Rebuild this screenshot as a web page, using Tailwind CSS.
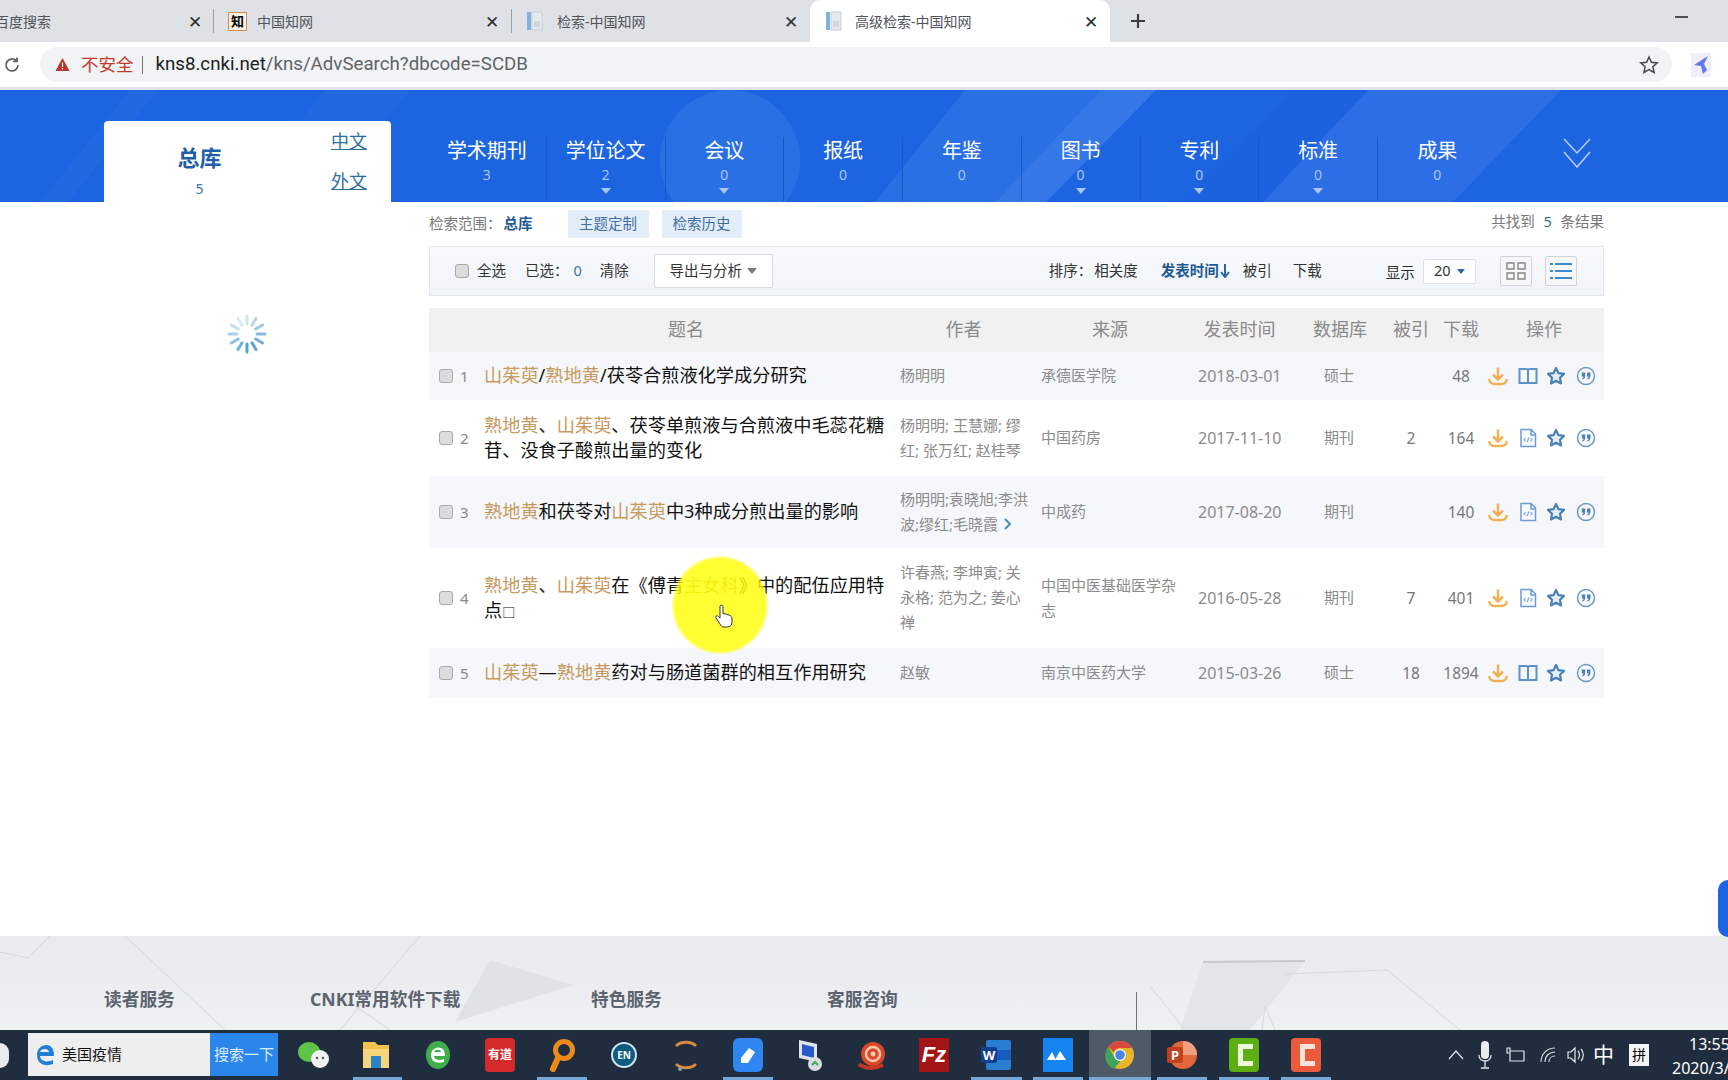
<!DOCTYPE html>
<html lang="zh-CN">
<head>
    <meta charset="UTF-8">
    <title>高级检索-中国知网</title>
    <script src="https://cdn.jsdelivr.net/npm/@tailwindcss/browser@4"></script>
</head>
<body class="w-[1728px] h-[1080px] overflow-hidden relative flex flex-col bg-white font-['Noto_Sans','Noto_Sans_CJK_SC',sans-serif]">
    <svg class="hidden">
        <symbol id="ic-down" viewBox="0 0 20 20"><path d="M10 1.500v12M5 8.500l5 5 5-5M1 13c.8 3.500 2.500 5 5 5h8c2.500 0 4.200-1.500 5-5" fill="none" stroke="#eeb255" stroke-width="2.500"/></symbol>
        <symbol id="ic-book" viewBox="0 0 20 20"><path d="M1.500 3h6.500c1.200 0 2 .8 2 2 0-1.200.8-2 2-2h6.500v14h-6.500c-1 0-2 .4-2 1 0-.6-1-1-2-1H1.500zM10 5v13" fill="none" stroke="#5b92c9" stroke-width="2"/></symbol>
        <symbol id="ic-doc" viewBox="0 0 20 20"><path d="M3 1.500h10l4.500 4.500v12.500H3zM13 1.500V7h4.500" fill="#f6f9fd" stroke="#6d9bd4" stroke-width="1.500"/><path d="M7.500 10l-1.500 1.700 1.500 1.700M12.500 10l1.500 1.700-1.500 1.700M10.800 9.500l-1.500 4.500" fill="none" stroke="#7fa5dc" stroke-width="1.100"/></symbol>
        <symbol id="ic-star" viewBox="0 0 20 20"><path d="M10 2l2.400 5.100 5.600.8-4 3.900 1 5.600-5-2.600-5 2.600 1-5.600-4-3.900 5.600-.8z" fill="#e3edf6" stroke="#4a80b4" stroke-width="2.200" stroke-linejoin="round"/></symbol>
        <symbol id="ic-quote" viewBox="0 0 20 20"><circle cx="10" cy="10" r="8.500" fill="#f6f9fd" stroke="#6e97c4" stroke-width="1.500"/><path d="M5.800 6.500h3.400v3.600c0 1.800-1 3-2.800 3.500l-.4-1c.9-.4 1.400-1 1.400-2H5.800zM11 6.500h3.400v3.600c0 1.800-1 3-2.800 3.500l-.4-1c.9-.4 1.400-1 1.400-2H11z" fill="#4f7fb5"/></symbol>
        <symbol id="ic-tabdoc" viewBox="0 0 20 20"><rect x="0" y="1" width="4" height="18" fill="#7fb2dc"/><path d="M5 1h10v18H5z" fill="#e7eaee" stroke="#c9ced4"/><path d="M7 10h6v6H7z" fill="#d3d7dc"/></symbol>
    </svg>

    <!-- browser tabs -->
    <div class="h-[42px] shrink-0 bg-[#dee1e6] flex items-stretch text-[14px] text-[#50545a] relative">
        <div class="w-[214px] flex items-center justify-between pr-[12px] relative overflow-hidden">
            <span class="-ml-[5px] whitespace-nowrap">百度搜索</span>
            <span class="text-[17px] leading-none text-[#2e3034]">✕</span>
            <span class="absolute right-0 top-[9px] w-px h-[24px] bg-[#9da1a6]"></span>
        </div>
        <div class="w-[298px] flex items-center pl-[14px] pr-[13px] relative">
            <span class="w-[19px] h-[19px] border border-[#d9894a] bg-[#f7f1e6] text-[13px] leading-[17px] text-center text-black font-bold font-['Liberation_Serif','Noto_Sans_CJK_SC',serif]">知</span>
            <span class="ml-[10px] flex-1">中国知网</span>
            <span class="text-[17px] leading-none text-[#2e3034]">✕</span>
            <span class="absolute right-0 top-[9px] w-px h-[24px] bg-[#9da1a6]"></span>
        </div>
        <div class="w-[298px] flex items-center pl-[15px] pr-[12px]">
            <svg class="w-[20px] h-[20px]"><use href="#ic-tabdoc"/></svg>
            <span class="ml-[10px] flex-1">检索-中国知网</span>
            <span class="text-[17px] leading-none text-[#2e3034]">✕</span>
        </div>
        <div class="w-[300px] bg-white rounded-t-[10px] flex items-center pl-[16px] pr-[12px]">
            <svg class="w-[20px] h-[20px]"><use href="#ic-tabdoc"/></svg>
            <span class="ml-[9px] flex-1">高级检索-中国知网</span>
            <span class="text-[17px] leading-none text-[#2e3034]">✕</span>
        </div>
        <svg class="w-[18px] h-[18px] ml-[19px] self-center" viewBox="0 0 18 18"><path d="M9 2v14M2 9h14" stroke="#3a3d41" stroke-width="2.200"/></svg>
        <span class="absolute left-[1675px] top-[16px] w-[13px] h-[2px] bg-[#4a4d52]"></span>
    </div>

    <!-- address bar -->
    <div class="h-[45px] shrink-0 bg-white flex items-start pt-[5px]">
        <svg class="w-[18px] h-[18px] mt-[9px] ml-[3px]" viewBox="0 0 18 18"><path d="M15 9a6 6 0 1 1-1.800-4.300M14 1.500v4h-4" fill="none" stroke="#5a5e63" stroke-width="1.700"/></svg>
        <div class="ml-[19px] w-[1632px] h-[35px] rounded-full bg-[#f1f3f4] flex items-center pl-[15px] pr-[13px]">
            <svg class="w-[15px] h-[15px]" viewBox="0 0 15 15"><path d="M7.500 1L14.500 14H.5z" fill="#b8352b"/><path d="M7.500 5.500v4.500M7.500 11v1.500" stroke="#fff" stroke-width="1.200"/></svg>
            <span class="ml-[11px] text-[17.500px] text-[#c0392b]">不安全</span>
            <span class="ml-[8px] w-px h-[18px] bg-[#777]"></span>
            <span class="ml-[13px] text-[18.700px] text-[#202124] font-['Roboto','Noto_Sans_CJK_SC',sans-serif]">kns8.cnki.net<span class="text-[#5f6368]">/kns/AdvSearch?dbcode=SCDB</span></span>
            <svg class="w-[20px] h-[20px] ml-auto" viewBox="0 0 20 20"><path d="M10 2l2.400 5.300 5.800.6-4.300 3.900 1.200 5.700L10 14.600l-5.100 2.900 1.200-5.700L1.800 7.900l5.800-.6z" fill="none" stroke="#44474b" stroke-width="1.500"/></svg>
        </div>
        <svg class="w-[20px] h-[24px] ml-[19px] mt-[6px] bg-[#f0eef8]" viewBox="0 0 20 24"><path d="M17 3L3 12l7 1 2 8 4-4-3-6z" fill="#5b7be8"/></svg>
    </div>
    <div class="h-[3px] shrink-0 bg-[#dfe3ea]"></div>

    <!-- blue database nav -->
    <div class="h-[112px] shrink-0 bg-[#1d64e0] relative flex items-start overflow-hidden">
        <svg class="absolute inset-0" width="1728" height="112" viewBox="0 0 1728 112">
            <polygon points="130,0 158,0 68,112 40,112" fill="#2168e1"/>
            <polygon points="325,0 410,0 320,112 235,112" fill="#2168e1"/>
            <circle cx="730" cy="70" r="70" fill="#2a70e5"/>
            <polygon points="965,0 1156,0 1046,112 875,112" fill="#2a70e5"/>
            <polygon points="1101,0 1156,0 1046,112 996,112" fill="#3478e8"/>
            <polygon points="1294,0 1368,0 1263,112 1180,112" fill="#1c61dd"/>
            <polygon points="1368,0 1561,0 1453,112 1263,112" fill="#2c6ee6"/>
        </svg>
        <div class="relative ml-[104px] mt-[31px] w-[287px] h-[81px] bg-white rounded-t-[4px] flex">
            <div class="w-[191px] flex flex-col items-center pt-[22px]">
                <span class="text-[22px] leading-[28px] font-bold text-[#1f5ea8]">总库</span>
                <span class="text-[14px] leading-[18px] mt-[9px] text-[#3f72a8]">5</span>
            </div>
            <div class="flex flex-col pl-[36px] pt-[8px] text-[18px] leading-[24px] text-[#2f6f9f] underline">
                <span>中文</span>
                <span class="mt-[16px]">外文</span>
            </div>
        </div>
        <div class="relative ml-[37px] mt-[47px] flex text-white">
            <div class="w-[118.750px] h-[64px] flex flex-col items-center border-r border-[#1a58c4]"><span class="text-[20px] leading-[28px]">学术期刊</span><span class="text-[14px] leading-[18px] text-[#a9c8f5] mt-[1px]">3</span></div>
            <div class="w-[118.750px] h-[64px] flex flex-col items-center border-r border-[#1a58c4]"><span class="text-[20px] leading-[28px]">学位论文</span><span class="text-[14px] leading-[18px] text-[#a9c8f5] mt-[1px]">2</span><span class="mt-[4px] border-x-[5px] border-x-transparent border-t-[6px] border-t-[#a9c8f5]"></span></div>
            <div class="w-[118.750px] h-[64px] flex flex-col items-center border-r border-[#1a58c4]"><span class="text-[20px] leading-[28px]">会议</span><span class="text-[14px] leading-[18px] text-[#a9c8f5] mt-[1px]">0</span><span class="mt-[4px] border-x-[5px] border-x-transparent border-t-[6px] border-t-[#a9c8f5]"></span></div>
            <div class="w-[118.750px] h-[64px] flex flex-col items-center border-r border-[#1a58c4]"><span class="text-[20px] leading-[28px]">报纸</span><span class="text-[14px] leading-[18px] text-[#a9c8f5] mt-[1px]">0</span></div>
            <div class="w-[118.750px] h-[64px] flex flex-col items-center border-r border-[#1a58c4]"><span class="text-[20px] leading-[28px]">年鉴</span><span class="text-[14px] leading-[18px] text-[#a9c8f5] mt-[1px]">0</span></div>
            <div class="w-[118.750px] h-[64px] flex flex-col items-center border-r border-[#1a58c4]"><span class="text-[20px] leading-[28px]">图书</span><span class="text-[14px] leading-[18px] text-[#a9c8f5] mt-[1px]">0</span><span class="mt-[4px] border-x-[5px] border-x-transparent border-t-[6px] border-t-[#a9c8f5]"></span></div>
            <div class="w-[118.750px] h-[64px] flex flex-col items-center border-r border-[#1a58c4]"><span class="text-[20px] leading-[28px]">专利</span><span class="text-[14px] leading-[18px] text-[#a9c8f5] mt-[1px]">0</span><span class="mt-[4px] border-x-[5px] border-x-transparent border-t-[6px] border-t-[#a9c8f5]"></span></div>
            <div class="w-[118.750px] h-[64px] flex flex-col items-center border-r border-[#1a58c4]"><span class="text-[20px] leading-[28px]">标准</span><span class="text-[14px] leading-[18px] text-[#a9c8f5] mt-[1px]">0</span><span class="mt-[4px] border-x-[5px] border-x-transparent border-t-[6px] border-t-[#a9c8f5]"></span></div>
            <div class="w-[118.750px] h-[64px] flex flex-col items-center"><span class="text-[20px] leading-[28px]">成果</span><span class="text-[14px] leading-[18px] text-[#a9c8f5] mt-[1px]">0</span></div>
            <svg class="w-[28px] h-[30px] ml-[66px] mt-[1px]" viewBox="0 0 28 30"><path d="M1 1l13 14L27 1M1 14l13 15 13-15" fill="none" stroke="#b9d2f7" stroke-width="1.500"/></svg>
        </div>
    </div>

    <!-- main -->
    <div class="h-[734px] shrink-0 flex relative">
        <div class="w-[429px] shrink-0 pl-[227px] pt-[112px]">
            <svg class="w-[40px] h-[40px]" viewBox="0 0 40 40" stroke-width="3" stroke-linecap="round">
                <path d="M20 2v8" stroke="#cfe3f2"/><path d="M29 4.400l-4 6.900" stroke="#b6d5ec"/><path d="M35.600 11l-6.900 4" stroke="#9cc6e6"/><path d="M38 20h-8" stroke="#86b9df"/><path d="M35.600 29l-6.900-4" stroke="#74aed9"/><path d="M29 35.600l-4-6.900" stroke="#62a3d4"/><path d="M20 38v-8" stroke="#5aa0d2"/><path d="M11 35.600l4-6.900" stroke="#6fb0dc"/><path d="M4.400 29l6.900-4" stroke="#8dc0e3"/><path d="M2 20h8" stroke="#a9d0ea"/><path d="M4.400 11l6.900 4" stroke="#c3def0"/><path d="M11 4.400l4 6.900" stroke="#d8eaf5"/>
            </svg>
        </div>
        <div class="w-[1175px] shrink-0">
            <div class="h-[44px] flex items-center text-[14.500px] text-[#777]">
                <span>检索范围：</span><span class="ml-[2px] font-bold text-[#1f5a96]">总库</span>
                <span class="ml-[35px] w-[81px] h-[28px] flex items-center justify-center bg-[#e3edf8] text-[#3f6e9f]">主题定制</span>
                <span class="ml-[13px] w-[80px] h-[28px] flex items-center justify-center bg-[#e3edf8] text-[#3f6e9f]">检索历史</span>
                <span class="ml-auto mb-[4px] text-[#777]">共找到 <span class="text-[#2f6f9f] mx-[5px]">5</span> 条结果</span>
            </div>
            <div class="h-[50px] flex items-center bg-gradient-to-b from-[#f9fafc] to-[#eff4f9] border border-[#e3e8ee] text-[14.500px] text-[#333]">
                <span class="ml-[25px] w-[14px] h-[14px] rounded-[3px] border border-[#aaa] bg-[#dcdcdc]"></span>
                <span class="ml-[8px]">全选</span>
                <span class="ml-[19px]">已选：</span>
                <span class="ml-[5px] text-[#3f72a8]">0</span>
                <span class="ml-[18px]">清除</span>
                <span class="ml-[25px] w-[119px] h-[34px] flex items-center justify-center gap-[5px] bg-white border border-[#d5dbe2] rounded-[2px]">导出与分析<span class="border-x-[5px] border-x-transparent border-t-[6px] border-t-[#777]"></span></span>
                <span class="ml-[276px]">排序：</span>
                <span class="ml-[2px]">相关度</span>
                <span class="ml-[23px] font-bold text-[#1f5a96]">发表时间</span>
                <svg class="w-[10px] h-[14px] ml-[1px]" viewBox="0 0 10 14"><path d="M5 0v12M1 8l4 5 4-5" fill="none" stroke="#2a65a5" stroke-width="2"/></svg>
                <span class="ml-[13px]">被引</span>
                <span class="ml-[21px]">下载</span>
                <span class="ml-[64px] mt-[3px]">显示</span>
                <span class="ml-[8px] w-[53px] h-[25px] flex items-center justify-center gap-[6px] bg-white border border-[#dde2e8] rounded-[2px]">20<span class="border-x-[4px] border-x-transparent border-t-[5px] border-t-[#2a65a5]"></span></span>
                <span class="ml-[24px] w-[32px] h-[30px] flex items-center justify-center bg-[#f5f7f9] border border-[#cfd4da] rounded-[2px]">
                    <svg class="w-[22px] h-[20px]" viewBox="0 0 22 20"><path d="M2 2h7v6H2zM13 2h7v6h-7zM2 12h7v6H2zM13 12h7v6h-7z" fill="none" stroke="#888" stroke-width="1.400"/></svg>
                </span>
                <span class="ml-[13px] w-[32px] h-[30px] flex items-center justify-center bg-[#f5f7f9] border border-[#cfd4da] rounded-[2px]">
                    <svg class="w-[22px] h-[18px]" viewBox="0 0 22 18"><path d="M5 2h17M5 9h17M5 16h17M0 2h3M0 9h3M0 16h3" stroke="#3c8ad0" stroke-width="2"/></svg>
                </span>
            </div>

            <div class="mt-[12px] h-[44px] pb-[2px] grid grid-cols-[55px_416px_141px_157px_102px_80px_62px_38px_124px] items-center bg-[#f1f1f1] text-[18px] text-[#8a8a8a] text-center whitespace-nowrap">
                <span></span><span class="-ml-[12px]">题名</span><span class="pr-[14px]">作者</span><span class="pr-[19px]">来源</span><span class="flex justify-center -ml-[19px]">发表时间</span><span>数据库</span><span>被引</span><span class="flex justify-center">下载</span><span class="pl-[4px]">操作</span>
            </div>

            <div class="h-[48px] grid grid-cols-[55px_416px_141px_157px_102px_80px_62px_38px_124px] items-center bg-[#f5f7fa] whitespace-nowrap">
                <div class="flex items-center pl-[10px] text-[15px] text-[#888]"><span class="w-[14px] h-[14px] rounded-[3px] border border-[#aaa] bg-[#dcdcdc]"></span><span class="ml-[7px]">1</span></div>
                <div class="text-[18.200px] leading-[25px] text-[#111] -mt-[1px]"><span class="text-[#c79a5f]">山茱萸</span>/<span class="text-[#c79a5f]">熟地黄</span>/茯苓合煎液化学成分研究</div>
                <div class="text-[15px] leading-[25px] text-[#8b8b8b] -mt-[1px]">杨明明</div>
                <div class="text-[15px] leading-[25px] text-[#8b8b8b] -mt-[1px]">承德医学院</div>
                <div class="text-[16px] text-[#8b8b8b] -mt-[1px]">2018-03-01</div>
                <div class="text-[15px] text-[#8b8b8b] text-center pr-[2px] -mt-[1px]">硕士</div>
                <div class="text-[15.500px] text-[#777] text-center mt-[2px]"></div>
                <div class="text-[15.500px] text-[#777] text-center flex justify-center mt-[2px]">48</div>
                <div class="flex items-center pl-[8px]"><svg class="w-5 h-5"><use href="#ic-down"/></svg><svg class="w-5 h-5 ml-[10px]"><use href="#ic-book"/></svg><svg class="w-5 h-5 ml-2"><use href="#ic-star"/></svg><svg class="w-5 h-5 ml-[10px]"><use href="#ic-quote"/></svg></div>
            </div>
            <div class="h-[76px] grid grid-cols-[55px_416px_141px_157px_102px_80px_62px_38px_124px] items-center whitespace-nowrap">
                <div class="flex items-center pl-[10px] text-[15px] text-[#888]"><span class="w-[14px] h-[14px] rounded-[3px] border border-[#aaa] bg-[#dcdcdc]"></span><span class="ml-[7px]">2</span></div>
                <div class="text-[18.200px] leading-[25px] text-[#111] -mt-[1px]"><span class="text-[#c79a5f]">熟地黄</span>、<span class="text-[#c79a5f]">山茱萸</span>、茯苓单煎液与合煎液中毛蕊花糖<br>苷、没食子酸煎出量的变化</div>
                <div class="text-[15px] leading-[25px] text-[#8b8b8b] -mt-[1px]">杨明明; 王慧娜; 缪<br>红; 张万红; 赵桂琴</div>
                <div class="text-[15px] leading-[25px] text-[#8b8b8b] -mt-[1px]">中国药房</div>
                <div class="text-[16px] text-[#8b8b8b] -mt-[1px]">2017-11-10</div>
                <div class="text-[15px] text-[#8b8b8b] text-center pr-[2px] -mt-[1px]">期刊</div>
                <div class="text-[15.500px] text-[#777] text-center mt-[2px]">2</div>
                <div class="text-[15.500px] text-[#777] text-center flex justify-center mt-[2px]">164</div>
                <div class="flex items-center pl-[8px]"><svg class="w-5 h-5"><use href="#ic-down"/></svg><svg class="w-5 h-5 ml-[10px]"><use href="#ic-doc"/></svg><svg class="w-5 h-5 ml-2"><use href="#ic-star"/></svg><svg class="w-5 h-5 ml-[10px]"><use href="#ic-quote"/></svg></div>
            </div>
            <div class="h-[72px] grid grid-cols-[55px_416px_141px_157px_102px_80px_62px_38px_124px] items-center bg-[#f5f7fa] whitespace-nowrap">
                <div class="flex items-center pl-[10px] text-[15px] text-[#888]"><span class="w-[14px] h-[14px] rounded-[3px] border border-[#aaa] bg-[#dcdcdc]"></span><span class="ml-[7px]">3</span></div>
                <div class="text-[18.200px] leading-[25px] text-[#111] -mt-[1px]"><span class="text-[#c79a5f]">熟地黄</span>和茯苓对<span class="text-[#c79a5f]">山茱萸</span>中3种成分煎出量的影响</div>
                <div class="text-[15px] leading-[25px] text-[#8b8b8b] flex flex-col -mt-[1px]"><span>杨明明;袁晓旭;李洪</span><span class="flex items-center">波;缪红;毛晓霞<svg class="w-[10px] h-[12px] ml-[5px]" viewBox="0 0 10 12"><path d="M2 1l5 5-5 5" fill="none" stroke="#4a8ab8" stroke-width="2"/></svg></span></div>
                <div class="text-[15px] leading-[25px] text-[#8b8b8b] -mt-[1px]">中成药</div>
                <div class="text-[16px] text-[#8b8b8b] -mt-[1px]">2017-08-20</div>
                <div class="text-[15px] text-[#8b8b8b] text-center pr-[2px] -mt-[1px]">期刊</div>
                <div class="text-[15.500px] text-[#777] text-center mt-[2px]"></div>
                <div class="text-[15.500px] text-[#777] text-center flex justify-center mt-[2px]">140</div>
                <div class="flex items-center pl-[8px]"><svg class="w-5 h-5"><use href="#ic-down"/></svg><svg class="w-5 h-5 ml-[10px]"><use href="#ic-doc"/></svg><svg class="w-5 h-5 ml-2"><use href="#ic-star"/></svg><svg class="w-5 h-5 ml-[10px]"><use href="#ic-quote"/></svg></div>
            </div>
            <div class="h-[100px] grid grid-cols-[55px_416px_141px_157px_102px_80px_62px_38px_124px] items-center whitespace-nowrap">
                <div class="flex items-center pl-[10px] text-[15px] text-[#888]"><span class="w-[14px] h-[14px] rounded-[3px] border border-[#aaa] bg-[#dcdcdc]"></span><span class="ml-[7px]">4</span></div>
                <div class="text-[18.200px] leading-[25px] text-[#111] mt-[1px]"><span class="text-[#c79a5f]">熟地黄</span>、<span class="text-[#c79a5f]">山茱萸</span>在《傅青<span class="text-[#c79a5f]">主女科</span>》中的配伍应用特<br>点<span class="text-[13px]">□</span></div>
                <div class="text-[15px] leading-[25px] text-[#8b8b8b] -mt-[1px]">许春燕; 李坤寅; 关<br>永格; 范为之; 姜心<br>禅</div>
                <div class="text-[15px] leading-[25px] text-[#8b8b8b] -mt-[1px]">中国中医基础医学杂<br>志</div>
                <div class="text-[16px] text-[#8b8b8b] -mt-[1px]">2016-05-28</div>
                <div class="text-[15px] text-[#8b8b8b] text-center pr-[2px] -mt-[1px]">期刊</div>
                <div class="text-[15.500px] text-[#777] text-center mt-[2px]">7</div>
                <div class="text-[15.500px] text-[#777] text-center flex justify-center mt-[2px]">401</div>
                <div class="flex items-center pl-[8px]"><svg class="w-5 h-5"><use href="#ic-down"/></svg><svg class="w-5 h-5 ml-[10px]"><use href="#ic-doc"/></svg><svg class="w-5 h-5 ml-2"><use href="#ic-star"/></svg><svg class="w-5 h-5 ml-[10px]"><use href="#ic-quote"/></svg></div>
            </div>
            <div class="h-[50px] grid grid-cols-[55px_416px_141px_157px_102px_80px_62px_38px_124px] items-center bg-[#f5f7fa] whitespace-nowrap">
                <div class="flex items-center pl-[10px] text-[15px] text-[#888]"><span class="w-[14px] h-[14px] rounded-[3px] border border-[#aaa] bg-[#dcdcdc]"></span><span class="ml-[7px]">5</span></div>
                <div class="text-[18.200px] leading-[25px] text-[#111] -mt-[1px]"><span class="text-[#c79a5f]">山茱萸</span>—<span class="text-[#c79a5f]">熟地黄</span>药对与肠道菌群的相互作用研究</div>
                <div class="text-[15px] leading-[25px] text-[#8b8b8b] -mt-[1px]">赵敏</div>
                <div class="text-[15px] leading-[25px] text-[#8b8b8b] -mt-[1px]">南京中医药大学</div>
                <div class="text-[16px] text-[#8b8b8b] -mt-[1px]">2015-03-26</div>
                <div class="text-[15px] text-[#8b8b8b] text-center pr-[2px] -mt-[1px]">硕士</div>
                <div class="text-[15.500px] text-[#777] text-center mt-[2px]">18</div>
                <div class="text-[15.500px] text-[#777] text-center flex justify-center mt-[2px]">1894</div>
                <div class="flex items-center pl-[8px]"><svg class="w-5 h-5"><use href="#ic-down"/></svg><svg class="w-5 h-5 ml-[10px]"><use href="#ic-book"/></svg><svg class="w-5 h-5 ml-2"><use href="#ic-star"/></svg><svg class="w-5 h-5 ml-[10px]"><use href="#ic-quote"/></svg></div>
            </div>
        </div>
    </div>

    <!-- site footer -->
    <div class="h-[94px] shrink-0 relative overflow-hidden bg-gradient-to-b from-[#e8ebee] to-[#eef0f2] text-[17.700px] font-bold text-[#5c6470]">
        <svg class="absolute inset-0" width="1728" height="94" viewBox="0 0 1728 94">
            <polygon points="490,24 573,49 455,86" fill="#e0e3e6"/>
            <polygon points="1203,26 1305,25 1250,94 1180,94" fill="#e3e6e9"/>
            <g fill="none" stroke="#d4d8dc" stroke-width="1">
                <path d="M125 0L225 94M420 0L340 94M0 16L28 22L50 0M340 60L390 94"/>
                <path d="M1285 38L1387 34M1262 94L1265 70L1275 94M1150 50L1185 94M1387 34L1460 94"/>
            </g>
            <path d="M1203 26L1305 25" stroke="#c6cacf" stroke-width="2"/>
        </svg>
        <span class="absolute left-[104px] top-[50px]">读者服务</span>
        <span class="absolute left-[310px] top-[50px]">CNKI常用软件下载</span>
        <span class="absolute left-[591px] top-[50px]">特色服务</span>
        <span class="absolute left-[827px] top-[50px]">客服咨询</span>
        <span class="absolute left-[1136px] top-[56px] w-px h-[38px] bg-[#6b7280]"></span>
    </div>

    <!-- windows taskbar -->
    <div class="h-[50px] shrink-0 bg-[#1f2d3f] flex items-stretch relative">
        <span class="absolute left-0 top-[13px] w-[9px] h-[25px] rounded-r-full bg-[#e8eaec]"></span>
        <div class="ml-[28px] mt-[3px] h-[43px] w-[182px] shrink-0 bg-[#eeeeee] flex items-center pl-[6px] text-[15px] text-[#111]">
            <svg class="w-[22px] h-[26px]" viewBox="0 0 22 26"><path d="M20 14H6c.5 5 6 7 13 4v4c-8 3-16 0-16-9 0-8 8-12 13-9 3 2 4 5 4 10zM6 10h9c0-4-8-4-9 0z" fill="#1f7fd8"/></svg>
            <span class="ml-[6px]">美国疫情</span>
        </div>
        <div class="mt-[3px] h-[43px] w-[68px] shrink-0 bg-[#2a86ea] flex items-center justify-center text-[15px] text-[#dcebfb]">搜索一下</div>
        <div class="ml-[5px] flex shrink-0">
            <div class="w-[62px] relative flex items-center justify-center">
                <svg class="w-[34px] h-[30px]" viewBox="0 0 34 30"><ellipse cx="12" cy="12" rx="11" ry="10" fill="#5fc44a"/><circle cx="23" cy="19" r="9" fill="#f2f2f2"/><circle cx="20" cy="18" r="1.200" fill="#555"/><circle cx="26" cy="18" r="1.200" fill="#555"/></svg>
            </div>
            <div class="w-[62px] relative flex items-center justify-center">
                <svg class="w-[28px] h-[28px]" viewBox="0 0 28 28"><path d="M1 1h12l3 3h11v23H1z" fill="#f2c14e"/><path d="M1 8h26v19H1z" fill="#f7d57c"/><path d="M9 15h10v12H9z" fill="#2a82c8"/></svg>
                <span class="absolute bottom-0 left-[8px] w-[49px] h-[3px] bg-[#76a7d6]"></span>
            </div>
            <div class="w-[62px] relative flex items-center justify-center">
                <svg class="w-[28px] h-[32px]" viewBox="0 0 28 32"><ellipse cx="14" cy="16" rx="12" ry="14" fill="#3fae4a"/><path d="M21 17H10c.5 4 5 5 10 3v3c-7 2-13 0-13-7 0-6 6-9 10-7 3 1 4 4 4 8zM10 13h7c0-3-6-3-7 0z" fill="#fff"/></svg>
            </div>
            <div class="w-[62px] relative flex items-center justify-center">
                <span class="w-[30px] h-[34px] rounded-[4px] bg-[#d42a2a] text-white text-[12px] font-bold flex items-center justify-center">有道</span>
            </div>
            <div class="w-[62px] relative flex items-center justify-center">
                <svg class="w-[28px] h-[34px]" viewBox="0 0 28 34"><circle cx="16" cy="12" r="8.500" fill="none" stroke="#ee8a1a" stroke-width="5"/><path d="M10 20L5 31" stroke="#ee8a1a" stroke-width="6" stroke-linecap="round"/></svg>
                <span class="absolute bottom-0 left-[6px] w-[50px] h-[3px] bg-[#76a7d6]"></span>
            </div>
            <div class="w-[62px] relative flex items-center justify-center">
                <span class="w-[26px] h-[26px] rounded-full bg-[#0e5a80] border-2 border-[#cfe3ee] text-white text-[10px] font-bold flex items-center justify-center">EN</span>
            </div>
            <div class="w-[62px] relative flex items-center justify-center">
                <svg class="w-[26px] h-[34px]" viewBox="0 0 26 34"><path d="M3 8c5-5 15-5 20 0M3 26c5 5 15 5 20 0" fill="none" stroke="#d98a3c" stroke-width="3"/><circle cx="7" cy="31" r="2" fill="#8aa0b4"/></svg>
            </div>
            <div class="w-[62px] relative flex items-center justify-center">
                <svg class="w-[30px] h-[34px]" viewBox="0 0 30 34"><rect width="30" height="34" rx="6" fill="#2f86f0"/><path d="M8 20l8-10 6 4-7 11H8z" fill="#fff"/></svg>
                <span class="absolute bottom-0 left-[6px] w-[50px] h-[3px] bg-[#76a7d6]"></span>
            </div>
            <div class="w-[62px] relative flex items-center justify-center">
                <svg class="w-[28px] h-[34px]" viewBox="0 0 28 34"><path d="M3 2l18 4v18L3 20z" fill="#dfe4ea"/><path d="M6 6l12 3v11L6 17z" fill="#2a5ac8"/><circle cx="19" cy="26" r="7" fill="#d8dde2"/><path d="M16 27l3-3 3 3" stroke="#3cae4a" stroke-width="2" fill="none"/></svg>
            </div>
            <div class="w-[62px] relative flex items-center justify-center">
                <svg class="w-[30px] h-[30px]" viewBox="0 0 30 30"><circle cx="16" cy="14" r="12" fill="#d9472c"/><circle cx="16" cy="14" r="7" fill="none" stroke="#f6c9a8" stroke-width="2.500"/><circle cx="16" cy="14" r="2.500" fill="#f6c9a8"/><path d="M2 24c6 5 16 5 24 1" stroke="#c9361f" stroke-width="4" fill="none"/></svg>
            </div>
            <div class="w-[62px] relative flex items-center justify-center">
                <span class="w-[30px] h-[34px] bg-[#a31414] text-white text-[22px] italic font-bold leading-none flex items-center justify-center font-['Liberation_Sans',sans-serif]">Fz</span>
            </div>
            <div class="w-[62px] relative flex items-center justify-center">
                <svg class="w-[32px] h-[32px]" viewBox="0 0 32 32"><rect x="6" y="1" width="25" height="30" rx="2" fill="#2b7cd3"/><path d="M6 11h25v10H6z" fill="#185abd"/><rect x="1" y="8" width="16" height="16" rx="2" fill="#103f91"/><text x="9" y="21" font-size="13" font-weight="700" fill="#fff" text-anchor="middle">W</text></svg>
                <span class="absolute bottom-0 left-[6px] w-[51px] h-[3px] bg-[#76a7d6]"></span>
            </div>
            <div class="w-[62px] relative flex items-center justify-center">
                <svg class="w-[30px] h-[34px]" viewBox="0 0 30 34"><rect width="30" height="34" fill="#1684f0"/><path d="M4 22l5-8 4 8zM12 22l5-9 6 9z" fill="#fff"/></svg>
                <span class="absolute bottom-0 left-[6px] w-[50px] h-[3px] bg-[#76a7d6]"></span>
            </div>
            <div class="w-[62px] relative flex items-center justify-center bg-[#4e5a68]">
                <svg class="w-[30px] h-[30px]" viewBox="0 0 30 30"><circle cx="15" cy="15" r="14" fill="#e8b52a"/><path d="M15 1a14 14 0 0 1 12.100 7H15a7 7 0 0 0-6.300 4L3.500 7A14 14 0 0 1 15 1z" fill="#d9473c"/><path d="M3.500 7l6 10.500a7 7 0 0 0 6 3.500L9 29A14 14 0 0 1 3.500 7z" fill="#3ea55a"/><circle cx="15" cy="15" r="6" fill="#fff"/><circle cx="15" cy="15" r="4.800" fill="#4a86e8"/></svg>
                <span class="absolute bottom-0 left-0 w-[62px] h-[3px] bg-[#76a7d6]"></span>
            </div>
            <div class="w-[62px] relative flex items-center justify-center">
                <svg class="w-[32px] h-[32px]" viewBox="0 0 32 32"><circle cx="17" cy="16" r="14" fill="#e2683c"/><path d="M17 2a14 14 0 0 1 14 14H17z" fill="#f0a080"/><rect x="1" y="8" width="16" height="16" rx="2" fill="#c2401f"/><text x="9" y="21" font-size="13" font-weight="700" fill="#fff" text-anchor="middle">P</text></svg>
                <span class="absolute bottom-0 left-[6px] w-[50px] h-[3px] bg-[#76a7d6]"></span>
            </div>
            <div class="w-[62px] relative flex items-center justify-center">
                <svg class="w-[30px] h-[34px]" viewBox="0 0 30 34"><rect width="30" height="34" rx="4" fill="#5cae14"/><path d="M24 6H9v22h15v-5H14V11h10z" fill="#eaf7d8"/></svg>
                <span class="absolute bottom-0 left-[6px] w-[50px] h-[3px] bg-[#76a7d6]"></span>
            </div>
            <div class="w-[62px] relative flex items-center justify-center">
                <svg class="w-[30px] h-[34px]" viewBox="0 0 30 34"><rect width="30" height="34" rx="4" fill="#ec5a3c"/><path d="M24 6H9v22h15v-5H14V11h10z" fill="#fbe3da"/></svg>
                <span class="absolute bottom-0 left-[6px] w-[50px] h-[3px] bg-[#76a7d6]"></span>
            </div>
        </div>
        <div class="ml-[111px] flex items-center text-white relative whitespace-nowrap shrink-0">
            <svg class="w-[16px] h-[10px]" viewBox="0 0 16 10"><path d="M1 9l7-8 7 8" fill="none" stroke="#e6e8ea" stroke-width="1.200"/></svg>
            <svg class="w-[14px] h-[30px] ml-[14px]" viewBox="0 0 14 30"><rect x="3" y="1" width="8" height="18" rx="4" fill="#e8eaec"/><path d="M1 15c0 8 12 8 12 0M7 21v6M3 28h8" stroke="#e8eaec" fill="none" stroke-width="1.300"/></svg>
            <svg class="w-[20px] h-[16px] ml-[13px]" viewBox="0 0 20 16"><path d="M5 4h14v10H5zM2 1h3v5H2z" fill="none" stroke="#e6e8ea" stroke-width="1.200"/></svg>
            <svg class="w-[18px] h-[18px] ml-[14px]" viewBox="0 0 18 18"><path d="M2 16C2 8 8 2 16 2M6 16c0-6 4-10 10-10M10 16c0-3 2-6 6-6" fill="none" stroke="#cfd4d9" stroke-width="1.100"/></svg>
            <svg class="w-[20px] h-[18px] ml-[9px]" viewBox="0 0 20 18"><path d="M2 6h3l4-4v14l-4-4H2zM12 5c2 2 2 6 0 8M15 3c3 3 3 9 0 12" fill="none" stroke="#e6e8ea" stroke-width="1.200"/></svg>
            <span class="ml-[7px] text-[21px]">中</span>
            <span class="ml-[15px] w-[20px] h-[22px] bg-[#f4f4f4] text-black text-[14px] leading-[22px] text-center">拼</span>
            <div class="ml-[23px] w-[60px] flex flex-col text-[16px] leading-[24px] pt-[1px]">
                <span class="pl-[17px]">13:55</span>
                <span>2020/3/21</span>
            </div>
        </div>
    </div>

    <!-- screen recorder pointer highlight and floating tab -->
    <div class="absolute left-[673px] top-[557px] w-[94px] h-[96px] rounded-full bg-[#ffff00]/80 blur-[1px]"></div>
    <svg class="absolute left-[715px] top-[604px] w-[18px] h-[24px]" viewBox="0 0 18 24"><path d="M5 2c1-1.500 3-1 3 .5V10l1-.5 5 1.500c2 .8 3 2 3 4v3c0 3-2 5-5 5H9c-2 0-3-1-4-3l-4-6c-1-2 1-3 2.500-1.500L5 14z" fill="#fff" stroke="#333" stroke-width="1"/></svg>
    <div class="absolute left-[1718px] top-[880px] w-[10px] h-[57px] rounded-l-[10px] bg-[#1d64e0]"></div>
</body>
</html>
